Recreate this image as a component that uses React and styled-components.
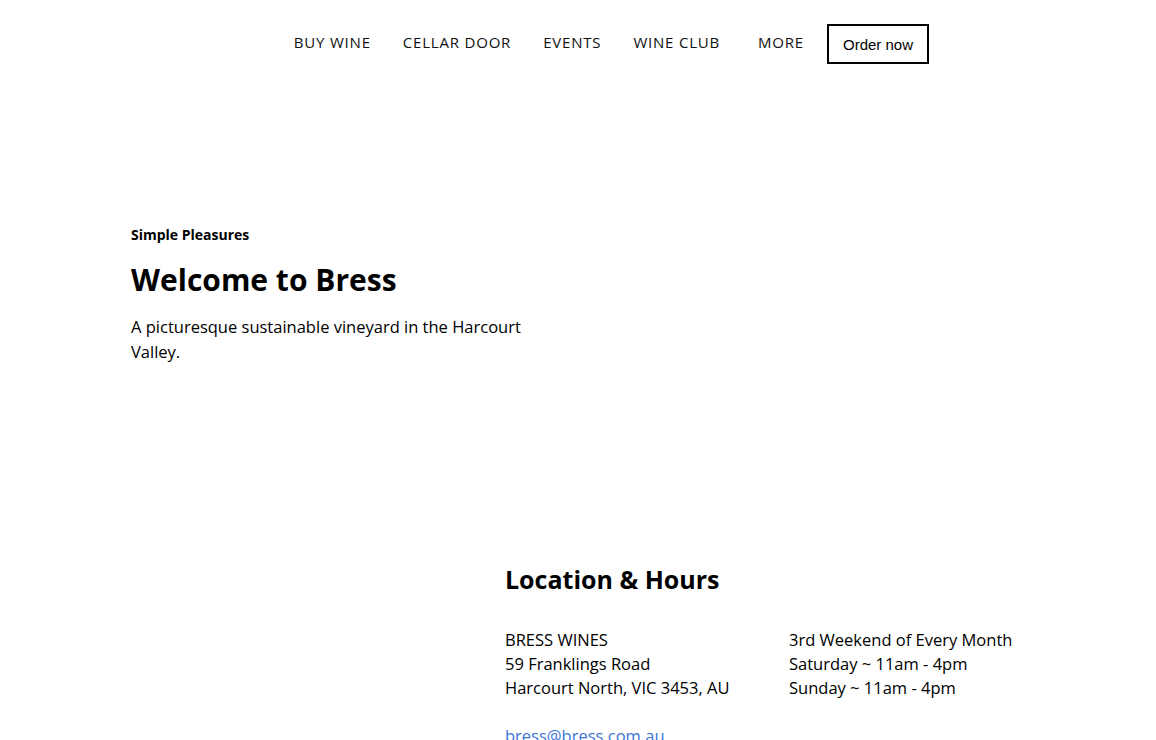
import React from "react";
import styled, { createGlobalStyle } from "styled-components";

const Global = createGlobalStyle`
  html, body { margin: 0; padding: 0; background: #fff; }
  body { font-family: "Open Sans", "Noto Sans", sans-serif; color: #000; }
  * { box-sizing: border-box; }
`;

const Header = styled.header`
  display: flex;
  justify-content: flex-end;
  align-items: center;
  padding: 24px 227px 0 0;
  height: 64px;
`;

const Nav = styled.nav`
  display: flex;
  align-items: center;
`;

const NavLink = styled.a`
  font-size: 15px;
  letter-spacing: 0.8px;
  line-height: 20px;
  margin-bottom: 4px;
  color: #111;
  text-decoration: none;
  margin-right: ${(p) => p.$gap || 32}px;
`;

const OrderButton = styled.button`
  font-family: "Liberation Sans", Arial, sans-serif;
  font-size: 15px;
  background: #fff;
  color: #000;
  border: 2px solid #000;
  width: 102px;
  height: 40px;
  padding: 0;
`;

const Hero = styled.section`
  padding: 162px 0 0 131px;
  height: 498px;
`;

const Eyebrow = styled.div`
  font-size: 14px;
  font-weight: 700;
  line-height: 18px;
`;

const Title = styled.h1`
  margin: 16px 0 0;
  font-size: 30px;
  font-weight: 700;
  line-height: 40px;
`;

const Lead = styled.p`
  margin: 14px 0 0;
  font-size: 16.5px;
  line-height: 25px;
  max-width: 410px;
`;

const Location = styled.section`
  padding: 0 0 0 505px;
`;

const SectionTitle = styled.h2`
  margin: 0;
  font-size: 25px;
  font-weight: 700;
  line-height: 34px;
`;

const Columns = styled.div`
  display: grid;
  grid-template-columns: 284px auto;
  margin-top: 32px;
`;

const Lines = styled.div`
  font-size: 16.5px;
  line-height: 24px;
`;

const Email = styled.a`
  display: block;
  margin-top: 24px;
  font-size: 16.5px;
  line-height: 24px;
  color: #3b73d6;
  text-decoration: none;
`;

export default function App() {
  return (
    <>
      <Global />
      <Header>
        <Nav>
          <NavLink href="#">BUY WINE</NavLink>
          <NavLink href="#">CELLAR DOOR</NavLink>
          <NavLink href="#">EVENTS</NavLink>
          <NavLink href="#" $gap={38}>WINE CLUB</NavLink>
          <NavLink href="#" $gap={23}>MORE</NavLink>
          <OrderButton>Order now</OrderButton>
        </Nav>
      </Header>
      <Hero>
        <Eyebrow>Simple Pleasures</Eyebrow>
        <Title>Welcome to Bress</Title>
        <Lead>A picturesque sustainable vineyard in the Harcourt Valley.</Lead>
      </Hero>
      <Location>
        <SectionTitle>Location &amp; Hours</SectionTitle>
        <Columns>
          <Lines>
            BRESS WINES<br />
            59 Franklings Road<br />
            Harcourt North, VIC 3453, AU
          </Lines>
          <Lines>
            3rd Weekend of Every Month<br />
            Saturday ~ 11am - 4pm<br />
            Sunday ~ 11am - 4pm
          </Lines>
        </Columns>
        <Email href="#">bress@bress.com.au</Email>
      </Location>
    </>
  );
}
